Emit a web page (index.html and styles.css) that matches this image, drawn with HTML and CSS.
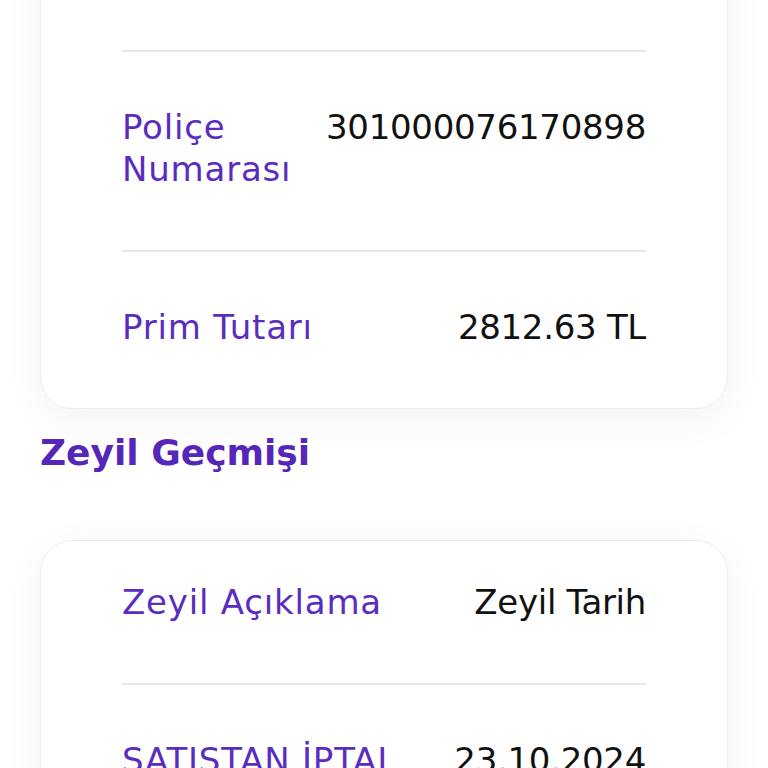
FILE: index.html
```html
<!DOCTYPE html>
<html lang="tr">
<head>
  <meta charset="UTF-8">
  <title>Poliçe Detay</title>
  <link rel="stylesheet" href="styles.css">
</head>
<body>
  <div class="page">
    <div class="card card-top">
      <div class="row row-cut"></div>
      <div class="row">
        <div class="label">Poliçe Numarası</div>
        <div class="value">301000076170898</div>
      </div>
      <div class="row">
        <div class="label">Prim Tutarı</div>
        <div class="value">2812.63 TL</div>
      </div>
    </div>

    <h2 class="section-title">Zeyil Geçmişi</h2>

    <div class="card">
      <div class="row row-first">
        <div class="label">Zeyil Açıklama</div>
        <div class="value">Zeyil Tarih</div>
      </div>
      <div class="row">
        <div class="label">SATIŞTAN İPTAL</div>
        <div class="value">23.10.2024</div>
      </div>
    </div>
  </div>
</body>
</html>
```

FILE: styles.css
```css
body {
  margin: 0;
  background: #fff;
  font-family: "DejaVu Sans", "Noto Sans", sans-serif;
  overflow: hidden;
}
.page {
  padding: 0 40px;
  height: 768px;
  overflow: hidden;
}
.card {
  background: #fff;
  border: 1px solid #ececec;
  border-radius: 32px;
  padding: 0 81px;
  box-shadow: 0 10px 40px rgba(0,0,0,0.05);
}
.card-top {
  margin-top: -40px;
  border-top-left-radius: 0;
  border-top-right-radius: 0;
}
.row {
  display: flex;
  justify-content: space-between;
  align-items: flex-start;
  gap: 16px;
  padding: 54px 0 60px;
  border-top: 2px solid #e6e6e6;
  font-size: 34px;
  line-height: 42px;
}
.row:first-child {
  border-top: none;
}
.row-cut {
  height: 89px;
  padding: 0;
}
.row-first {
  padding-top: 40px;
}
.label {
  color: #5a2cc0;
  letter-spacing: 0.8px;
}
.value {
  color: #111;
  text-align: right;
  white-space: nowrap;
  letter-spacing: -0.3px;
}
.section-title {
  margin: 22px 0 65px;
  color: #5526b8;
  font-size: 36px;
  line-height: 44px;
  font-weight: bold;
}
```
